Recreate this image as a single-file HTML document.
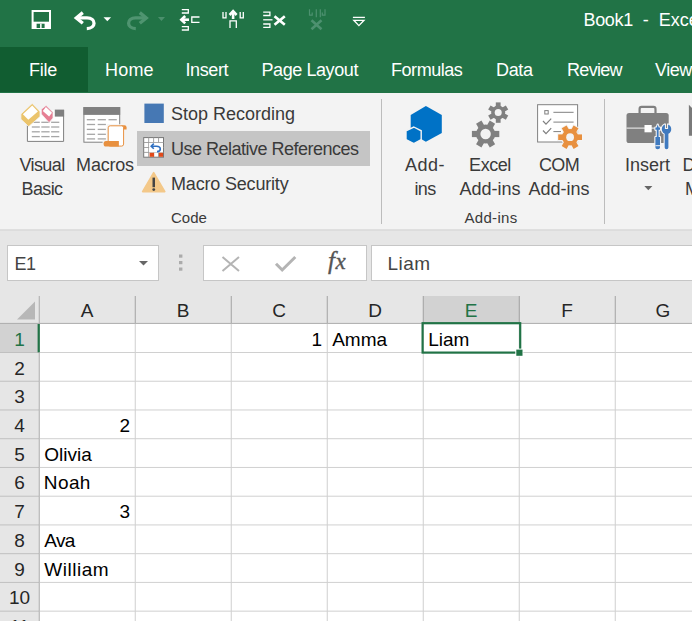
<!DOCTYPE html>
<html>
<head>
<meta charset="utf-8">
<title>Book1 - Excel</title>
<style>
html,body{margin:0;padding:0;}
body{width:692px;height:621px;overflow:hidden;position:relative;background:#e6e6e6;font-family:"Liberation Sans",sans-serif;color:#444;}
.abs{position:absolute;}
#title{left:0;top:0;width:692px;height:93px;background:#217346;}
#filetab{left:0;top:47px;width:88px;height:45px;background:#115d31;}
.tab{position:absolute;top:60px;font-size:18px;line-height:21px;color:#fff;white-space:nowrap;}
#ribbon{left:0;top:93px;width:692px;height:137px;background:#f3f3f3;}
.rt{position:absolute;font-size:18px;line-height:24px;color:#3a3a3a;white-space:nowrap;text-align:center;}
.gl{position:absolute;font-size:15px;line-height:18px;color:#3a3a3a;white-space:nowrap;}
.sep{position:absolute;top:99px;width:1px;height:125px;background:#bcbcbc;}
#hl{left:137px;top:131px;width:233px;height:34.6px;background:#c5c5c5;}
.box{position:absolute;top:245px;height:34px;background:#fff;border:1px solid #c6c6c6;}
#grid{left:0;top:295px;width:692px;height:326px;background:#fff;}
.ch{position:absolute;top:296.6px;height:27px;width:96px;font-size:19px;line-height:27px;text-align:center;color:#262626;}
.rh{position:absolute;left:0;width:39px;height:29px;font-size:19px;text-align:center;color:#262626;}
.cell{position:absolute;font-size:19px;line-height:22px;color:#000;white-space:nowrap;}
</style>
</head>
<body>
<div id="title" class="abs"></div>
<div id="filetab" class="abs"></div>
<div class="tab" style="left:29px;letter-spacing:-0.25px;">File</div>
<div class="tab" style="left:105px;letter-spacing:0.2px;">Home</div>
<div class="tab" style="left:185.5px;letter-spacing:-0.4px;">Insert</div>
<div class="tab" style="left:261.5px;letter-spacing:-0.42px;">Page Layout</div>
<div class="tab" style="left:391px;letter-spacing:-0.45px;">Formulas</div>
<div class="tab" style="left:496px;letter-spacing:-0.33px;">Data</div>
<div class="tab" style="left:567px;letter-spacing:-0.68px;">Review</div>
<div class="tab" style="left:655px;letter-spacing:-0.5px;">View</div>
<div class="tab" style="left:583.5px;top:10px;"><span style="letter-spacing:-0.35px;">Book1</span>&nbsp; -&nbsp; Excel</div>

<div id="ribbon" class="abs"></div>
<div id="hl" class="abs"></div>
<div class="sep" style="left:381px;"></div>
<div class="sep" style="left:604px;"></div>

<div class="rt" style="left:12px;width:60px;top:152.5px;letter-spacing:-0.6px;">Visual<br>Basic</div>
<div class="rt" style="left:75px;width:60px;top:152.5px;letter-spacing:-0.2px;">Macros</div>
<div class="rt" style="left:171px;top:102px;text-align:left;">Stop Recording</div>
<div class="rt" style="left:171px;top:137px;text-align:left;letter-spacing:-0.5px;">Use Relative References</div>
<div class="rt" style="left:171px;top:172px;text-align:left;letter-spacing:-0.18px;">Macro Security</div>
<div class="gl" style="left:171px;top:209px;">Code</div>

<div class="rt" style="left:395px;width:60px;top:152.5px;"><span style="letter-spacing:0.5px;">Add-</span><br><span style="letter-spacing:-0.7px;">ins</span></div>
<div class="rt" style="left:455px;width:70px;top:152.5px;"><span style="letter-spacing:-0.45px;">Excel</span><br>Add-ins</div>
<div class="rt" style="left:524px;width:70px;top:152.5px;"><span style="letter-spacing:-0.7px;">COM</span><br>Add-ins</div>
<div class="gl" style="left:464.5px;top:209px;letter-spacing:0.3px;">Add-ins</div>
<div class="rt" style="left:617.5px;width:60px;top:152.5px;">Insert</div>
<div class="rt" style="left:682.5px;top:152.5px;text-align:left;">D</div><div class="rt" style="left:685px;top:176.5px;text-align:left;">M</div>

<!-- formula bar -->
<div class="box" style="left:7px;width:150px;"></div>
<div class="box" style="left:203px;width:162px;"></div>
<div class="box" style="left:371px;width:330px;"></div>
<div class="abs" style="left:14.5px;top:254px;font-size:18px;line-height:21px;color:#444;letter-spacing:-0.5px;">E1</div>
<div class="abs" style="left:387.5px;top:253px;font-size:19px;line-height:22px;color:#444;letter-spacing:0.5px;">Liam</div>
<div class="abs" style="left:328px;top:247px;font-size:25px;line-height:28px;color:#555;font-family:'Liberation Serif',serif;font-style:italic;-webkit-text-stroke:0.35px #555;letter-spacing:0.6px;">f<span style="font-size:23px;">x</span></div>

<!-- grid -->
<div id="grid" class="abs"></div>
<div class="abs" style="left:0;top:295px;width:692px;height:28px;background:#e6e6e6;"></div>
<div class="abs" style="left:0;top:323px;width:39px;height:298px;background:#e6e6e6;"></div>
<div class="abs" style="left:423px;top:296px;width:97px;height:27px;background:#d2d2d2;"></div>
<div class="abs" style="left:0;top:324px;width:38px;height:28px;background:#d2d2d2;"></div>
<div class="ch" style="left:39px;color:#262626;">A</div>
<div class="ch" style="left:135px;color:#262626;">B</div>
<div class="ch" style="left:231px;color:#262626;">C</div>
<div class="ch" style="left:327px;color:#262626;">D</div>
<div class="ch" style="left:423px;color:#217346;">E</div>
<div class="ch" style="left:519px;color:#262626;">F</div>
<div class="ch" style="left:615px;color:#262626;">G</div>
<div class="rh" style="top:328.8px;color:#217346;">1</div>
<div class="rh" style="top:357.5px;color:#262626;">2</div>
<div class="rh" style="top:386.2px;color:#262626;">3</div>
<div class="rh" style="top:415.0px;color:#262626;">4</div>
<div class="rh" style="top:443.7px;color:#262626;">5</div>
<div class="rh" style="top:472.4px;color:#262626;">6</div>
<div class="rh" style="top:501.2px;color:#262626;">7</div>
<div class="rh" style="top:529.9px;color:#262626;">8</div>
<div class="rh" style="top:558.7px;color:#262626;">9</div>
<div class="rh" style="top:587.4px;color:#262626;">10</div>
<div class="rh" style="top:616.1px;color:#262626;">11</div>
<div class="cell" style="left:231.2px;width:91px;text-align:right;top:328.8px;">1</div>
<div class="cell" style="left:332.2px;top:328.8px;letter-spacing:0px;">Amma</div>
<div class="cell" style="left:428.2px;top:328.8px;letter-spacing:0px;">Liam</div>
<div class="cell" style="left:39.2px;width:91px;text-align:right;top:415.0px;">2</div>
<div class="cell" style="left:44.2px;top:443.7px;letter-spacing:0px;">Olivia</div>
<div class="cell" style="left:43.8px;top:472.4px;letter-spacing:0.4px;">Noah</div>
<div class="cell" style="left:39.2px;width:91px;text-align:right;top:501.2px;">3</div>
<div class="cell" style="left:44.2px;top:529.9px;letter-spacing:-0.6px;">Ava</div>
<div class="cell" style="left:44.2px;top:558.7px;letter-spacing:0.55px;">William</div>

<svg class="abs" style="left:0;top:0;" width="692" height="621" viewBox="0 0 692 621" id="ov">
<rect x="40" y="351.99" width="652" height="1" fill="#d0d0d0"/>
<rect x="0" y="351.99" width="39" height="1" fill="#c0c0c0"/>
<rect x="40" y="380.73" width="652" height="1" fill="#d0d0d0"/>
<rect x="0" y="380.73" width="39" height="1" fill="#c0c0c0"/>
<rect x="40" y="409.47" width="652" height="1" fill="#d0d0d0"/>
<rect x="0" y="409.47" width="39" height="1" fill="#c0c0c0"/>
<rect x="40" y="438.21" width="652" height="1" fill="#d0d0d0"/>
<rect x="0" y="438.21" width="39" height="1" fill="#c0c0c0"/>
<rect x="40" y="466.95" width="652" height="1" fill="#d0d0d0"/>
<rect x="0" y="466.95" width="39" height="1" fill="#c0c0c0"/>
<rect x="40" y="495.69" width="652" height="1" fill="#d0d0d0"/>
<rect x="0" y="495.69" width="39" height="1" fill="#c0c0c0"/>
<rect x="40" y="524.43" width="652" height="1" fill="#d0d0d0"/>
<rect x="0" y="524.43" width="39" height="1" fill="#c0c0c0"/>
<rect x="40" y="553.17" width="652" height="1" fill="#d0d0d0"/>
<rect x="0" y="553.17" width="39" height="1" fill="#c0c0c0"/>
<rect x="40" y="581.91" width="652" height="1" fill="#d0d0d0"/>
<rect x="0" y="581.91" width="39" height="1" fill="#c0c0c0"/>
<rect x="40" y="610.65" width="652" height="1" fill="#d0d0d0"/>
<rect x="0" y="610.65" width="39" height="1" fill="#c0c0c0"/>
<rect x="40" y="639.39" width="652" height="1" fill="#d0d0d0"/>
<rect x="0" y="639.39" width="39" height="1" fill="#c0c0c0"/>
<rect x="134.75" y="324" width="1" height="297" fill="#d0d0d0"/>
<rect x="134.75" y="296" width="1" height="27" fill="#a2a2a2"/>
<rect x="230.75" y="324" width="1" height="297" fill="#d0d0d0"/>
<rect x="230.75" y="296" width="1" height="27" fill="#a2a2a2"/>
<rect x="326.75" y="324" width="1" height="297" fill="#d0d0d0"/>
<rect x="326.75" y="296" width="1" height="27" fill="#a2a2a2"/>
<rect x="422.75" y="324" width="1" height="297" fill="#d0d0d0"/>
<rect x="422.75" y="296" width="1" height="27" fill="#a2a2a2"/>
<rect x="518.75" y="324" width="1" height="297" fill="#d0d0d0"/>
<rect x="518.75" y="296" width="1" height="27" fill="#a2a2a2"/>
<rect x="614.75" y="324" width="1" height="297" fill="#d0d0d0"/>
<rect x="614.75" y="296" width="1" height="27" fill="#a2a2a2"/>
<rect x="710.75" y="324" width="1" height="297" fill="#d0d0d0"/>
<rect x="710.75" y="296" width="1" height="27" fill="#a2a2a2"/>
<rect x="0" y="322.9" width="692" height="1" fill="#ababab"/>
<rect x="38.75" y="296" width="1" height="325" fill="#ababab"/>
<path d="M35 301.5 L35 319.5 L17 319.5 Z" fill="#b7b7b7"/>
<rect x="37.6" y="324" width="2.2" height="28.3" fill="#217346"/>
<rect x="422.6" y="323.2" width="97.6" height="29.4" fill="none" stroke="#217346" stroke-width="2.2"/>
<rect x="515.3" y="348.6" width="8" height="8" fill="#fff"/>
<rect x="516.3" y="349.6" width="6.2" height="6.2" fill="#217346"/>
<rect x="32.6" y="11" width="17.4" height="17" fill="none" stroke="#fff" stroke-width="2"/>
<rect x="33" y="21.7" width="17" height="7" fill="#fff"/>
<rect x="36.6" y="23.7" width="8" height="4.3" fill="#217346"/>
<rect x="40.1" y="23.7" width="1.5" height="4.3" fill="#fff"/>
<g fill="none" stroke="#fff" stroke-width="3.3"><path d="M82.8 12.6 L76.3 17.9 L82.8 23.3" stroke-linejoin="miter"/><path d="M77 17.9 H87 C96.3 17.9 96.5 28.3 86.8 28.6"/></g>
<path d="M103.5 17.3 H111.1 L107.3 21.2 Z" fill="#fff"/>
<g fill="none" stroke="#4f9470" stroke-width="3.3" transform="translate(222.6,0) scale(-1,1)"><path d="M82.8 12.6 L76.3 17.9 L82.8 23.3" stroke-linejoin="miter"/><path d="M77 17.9 H87 C96.3 17.9 96.5 28.3 86.8 28.6"/></g>
<path d="M157.9 17 H165 L161.45 21 Z" fill="#4b8f6c"/>
<g fill="none" stroke="#fff" stroke-width="1.3">
<path d="M181.8 9.7 H188.3 V13 H181.8"/>
<path d="M181.8 26.6 H188.3 V30 H181.8"/>
<path d="M199.5 17 H191.8 V22.4 H199.5"/>
</g>
<g fill="none" stroke="#fff" stroke-width="2.6"><path d="M181.5 19.7 H189"/><path d="M185.2 16 L181.3 19.7 L185.2 23.4"/></g>
<g fill="none" stroke="#fff" stroke-width="1.3">
<path d="M223 12 V17.8 H226 V12"/>
<path d="M240.2 12 V17.8 H243.3 V12"/>
<path d="M230 28 V20.8 H236.3 V28"/>
</g>
<g fill="none" stroke="#fff" stroke-width="2.6"><path d="M233.1 11.5 V19"/><path d="M229.6 15 L233.1 11.2 L236.6 15"/></g>
<g fill="none" stroke="#fff" stroke-width="1.3">
<path d="M263.2 12.2 H269.9 V15.5 H263.2"/>
<path d="M263.2 19.8 H272.5"/>
<path d="M263.2 24 H269.9 V27.4 H263.2"/>
</g>
<g fill="none" stroke="#fff" stroke-width="2.6"><path d="M274.5 16.2 L284.8 24.8 M284.8 16.2 L274.5 24.8"/></g>
<g fill="none" stroke="#4d9170" stroke-width="1.2">
<path d="M309.5 9.3 V15.2 H312.2 V12.5"/>
<path d="M316.3 9.3 V17.3"/>
<path d="M320.3 9.3 V17.3"/>
<path d="M325 9.3 V15.2 H322.3 V12.5"/>
</g>
<g fill="none" stroke="#4d9170" stroke-width="2.6"><path d="M311.5 20.3 L321.5 29.3 M321.5 20.3 L311.5 29.3"/></g>
<g fill="none" stroke="#fff" stroke-width="1.3"><path d="M352.9 17.4 H364.9"/><path d="M353.8 20.3 H364 L358.9 25.6 Z"/></g>
<rect x="27.4" y="110.1" width="36.2" height="31.3" fill="#fff"/>
<path d="M27.4 116 V141.4 H63.6 V110.1" fill="none" stroke="#7f7f7f" stroke-width="1"/>
<rect x="54.8" y="109.6" width="9.3" height="7" fill="#7f7f7f"/>
<rect x="31.8" y="121.64999999999999" width="8.0" height="1.3" fill="#a6a6a6"/>
<rect x="41.3" y="121.64999999999999" width="8.3" height="1.3" fill="#a6a6a6"/>
<rect x="51.1" y="121.64999999999999" width="8.2" height="1.3" fill="#a6a6a6"/>
<rect x="31.8" y="126.35" width="8.0" height="1.3" fill="#a6a6a6"/>
<rect x="41.3" y="126.35" width="8.3" height="1.3" fill="#a6a6a6"/>
<rect x="51.1" y="126.35" width="8.2" height="1.3" fill="#a6a6a6"/>
<rect x="31.8" y="131.15" width="8.0" height="1.3" fill="#a6a6a6"/>
<rect x="41.3" y="131.15" width="8.3" height="1.3" fill="#a6a6a6"/>
<rect x="51.1" y="131.15" width="8.2" height="1.3" fill="#a6a6a6"/>
<rect x="31.8" y="135.95" width="8.0" height="1.3" fill="#a6a6a6"/>
<rect x="41.3" y="135.95" width="8.3" height="1.3" fill="#a6a6a6"/>
<rect x="51.1" y="135.95" width="8.2" height="1.3" fill="#a6a6a6"/>
<polygon points="32.2,103.4 40,111.4 40,116.6 28.7,126.6 20.9,119.2 20.9,114" fill="#ebc46c" stroke="#f3f3f3" stroke-width="0.8"/>
<polygon points="32.2,105.6 37.9,111.4 28.3,119.7 22.9,114.3" fill="#fff"/>
<polygon points="46.1,105.4 53,112.3 53,118 49.1,122.7 41.3,114 41.3,109.3" fill="#e67f94" stroke="#f3f3f3" stroke-width="0.8"/>
<polygon points="45.9,106.9 52,112.7 49.1,116.6 42.8,111" fill="#fff"/>
<rect x="83.9" y="107.6" width="35.8" height="34.6" fill="#fff" stroke="#808080" stroke-width="1"/>
<rect x="83.4" y="107.1" width="36.8" height="7.8" fill="#808080"/>
<rect x="86.8" y="119.05" width="8.3" height="1.3" fill="#a6a6a6"/>
<rect x="97.7" y="119.05" width="8.2" height="1.3" fill="#a6a6a6"/>
<rect x="108.5" y="119.05" width="8.3" height="1.3" fill="#a6a6a6"/>
<rect x="86.8" y="123.85" width="8.3" height="1.3" fill="#a6a6a6"/>
<rect x="97.7" y="123.85" width="8.2" height="1.3" fill="#a6a6a6"/>
<rect x="86.8" y="128.75" width="8.3" height="1.3" fill="#a6a6a6"/>
<rect x="97.7" y="128.75" width="8.2" height="1.3" fill="#a6a6a6"/>
<rect x="86.8" y="133.65" width="8.3" height="1.3" fill="#a6a6a6"/>
<rect x="97.7" y="133.65" width="8.2" height="1.3" fill="#a6a6a6"/>
<rect x="86.8" y="138.25" width="8.3" height="1.3" fill="#a6a6a6"/>
<rect x="97.7" y="138.25" width="8.2" height="1.3" fill="#a6a6a6"/>
<path d="M102.6 147.6 V140 H106.6 V124.3 H127.6 V130.6 H125.2 V147.6 Z" fill="#f4f4f4"/>
<path d="M121 125.3 H124.5 Q126.6 125.3 126.6 127.4 V129.6 H121 Z" fill="#e8903f"/>
<rect x="108.2" y="125.8" width="15.4" height="20.3" rx="2" fill="#fff" stroke="#e8903f" stroke-width="1"/>
<path d="M106 140.9 H118.9 V146.6 H106 Q103.6 146.6 103.6 143.75 Q103.6 140.9 106 140.9 Z" fill="#e8903f"/>
<rect x="144.4" y="103.6" width="19.4" height="19.4" fill="#4678b4"/>
<rect x="143.7" y="137.6" width="19.8" height="19.6" fill="#fff" stroke="#777" stroke-width="1"/>
<rect x="148.25" y="137.6" width="0.9" height="19.6" fill="#9a9a9a"/>
<rect x="143.7" y="142.10" width="19.8" height="0.9" fill="#9a9a9a"/>
<rect x="153.20" y="137.6" width="0.9" height="19.6" fill="#9a9a9a"/>
<rect x="143.7" y="147.00" width="19.8" height="0.9" fill="#9a9a9a"/>
<rect x="158.15" y="137.6" width="0.9" height="19.6" fill="#9a9a9a"/>
<rect x="143.7" y="151.90" width="19.8" height="0.9" fill="#9a9a9a"/>
<rect x="149.2" y="142.9" width="13.8" height="9.5" fill="#fff"/>
<rect x="149.6" y="152.8" width="4.5" height="4" fill="#e04a1b"/>
<rect x="158.9" y="152.8" width="4.2" height="4" fill="#e04a1b"/>
<g fill="none" stroke="#2f6fc0" stroke-width="1.6"><path d="M151.5 146.2 H156.5 Q160.3 146.2 160.3 149 Q160.3 151.6 157 151.6"/><path d="M153.8 143.6 L151.2 146.2 L153.8 148.8"/></g>
<path d="M153.7 172.6 L164.8 191.6 H142.6 Z" fill="#f3c889" stroke="#f3c889" stroke-width="1.6" stroke-linejoin="round"/>
<rect x="152.5" y="177.6" width="2.5" height="9.6" fill="#444"/>
<circle cx="153.75" cy="189.6" r="1.4" fill="#444"/>
<polygon points="425.9,106 441.8,114.9 441.8,133.1 425.9,141.8 410.7,133.1 410.7,114.9" fill="#0072c6"/>
<polygon points="413.8,127 421.2,130.8 421.2,139.5 413.8,143.5 406,139.5 406,130.8" fill="#0072c6" stroke="#f3f3f3" stroke-width="1.4"/>
<g fill="#808080"><circle cx="485.6" cy="134" r="9.6"/><rect x="482.50" y="120.30" width="6.2" height="13.70" transform="rotate(30.0 485.6 134)"/><rect x="482.50" y="120.30" width="6.2" height="13.70" transform="rotate(90.0 485.6 134)"/><rect x="482.50" y="120.30" width="6.2" height="13.70" transform="rotate(150.0 485.6 134)"/><rect x="482.50" y="120.30" width="6.2" height="13.70" transform="rotate(210.0 485.6 134)"/><rect x="482.50" y="120.30" width="6.2" height="13.70" transform="rotate(270.0 485.6 134)"/><rect x="482.50" y="120.30" width="6.2" height="13.70" transform="rotate(330.0 485.6 134)"/></g><circle cx="485.6" cy="134" r="5.2" fill="#f3f3f3"/>
<g fill="#808080"><circle cx="498.2" cy="112.6" r="7"/><rect x="495.80" y="102.40" width="4.8" height="10.20" transform="rotate(0.0 498.2 112.6)"/><rect x="495.80" y="102.40" width="4.8" height="10.20" transform="rotate(60.0 498.2 112.6)"/><rect x="495.80" y="102.40" width="4.8" height="10.20" transform="rotate(120.0 498.2 112.6)"/><rect x="495.80" y="102.40" width="4.8" height="10.20" transform="rotate(180.0 498.2 112.6)"/><rect x="495.80" y="102.40" width="4.8" height="10.20" transform="rotate(240.0 498.2 112.6)"/><rect x="495.80" y="102.40" width="4.8" height="10.20" transform="rotate(300.0 498.2 112.6)"/></g><circle cx="498.2" cy="112.6" r="3.5" fill="#f3f3f3"/>
<rect x="537.6" y="104.7" width="40" height="37.3" fill="#fff" stroke="#808080" stroke-width="1"/>
<rect x="544.8" y="110.6" width="3.4" height="3.4" fill="#fff" stroke="#808080" stroke-width="1"/>
<g fill="none" stroke="#808080" stroke-width="1"><path d="M553.4 112.3 H573.6 M553.4 122.1 H573.6 M553.4 131.6 H561"/><path d="M543 121 L546 124.2 L551.2 118.6 M543 130.5 L546 133.7 L551.2 128.1" stroke-width="1.2"/></g>
<g fill="#f4f4f4" stroke="#f4f4f4" stroke-width="2"><circle cx="570.1" cy="137.2" r="8.2"/><rect x="567.30" y="125.30" width="5.6" height="11.90" transform="rotate(30.0 570.1 137.2)"/><rect x="567.30" y="125.30" width="5.6" height="11.90" transform="rotate(90.0 570.1 137.2)"/><rect x="567.30" y="125.30" width="5.6" height="11.90" transform="rotate(150.0 570.1 137.2)"/><rect x="567.30" y="125.30" width="5.6" height="11.90" transform="rotate(210.0 570.1 137.2)"/><rect x="567.30" y="125.30" width="5.6" height="11.90" transform="rotate(270.0 570.1 137.2)"/><rect x="567.30" y="125.30" width="5.6" height="11.90" transform="rotate(330.0 570.1 137.2)"/></g><g fill="#e8903f"><circle cx="570.1" cy="137.2" r="8.2"/><rect x="567.30" y="125.30" width="5.6" height="11.90" transform="rotate(30.0 570.1 137.2)"/><rect x="567.30" y="125.30" width="5.6" height="11.90" transform="rotate(90.0 570.1 137.2)"/><rect x="567.30" y="125.30" width="5.6" height="11.90" transform="rotate(150.0 570.1 137.2)"/><rect x="567.30" y="125.30" width="5.6" height="11.90" transform="rotate(210.0 570.1 137.2)"/><rect x="567.30" y="125.30" width="5.6" height="11.90" transform="rotate(270.0 570.1 137.2)"/><rect x="567.30" y="125.30" width="5.6" height="11.90" transform="rotate(330.0 570.1 137.2)"/></g><circle cx="570.1" cy="137.2" r="3.9" fill="#f3f3f3"/>
<rect x="639.6" y="106.9" width="15.9" height="10" rx="2" fill="none" stroke="#808080" stroke-width="2.2"/>
<rect x="626.5" y="113.1" width="42.2" height="29.9" rx="2.6" fill="#808080"/>
<rect x="626.5" y="127.6" width="29" height="1" fill="#f3f3f3"/>
<rect x="644.5" y="125" width="7.2" height="7.3" fill="#fff"/>
<g fill="#f3f3f3" stroke="#f3f3f3" stroke-width="2.2" stroke-linejoin="round">
<path d="M657.7 124.6 L658.7 127.6 H660 V129.8 H658.6 V137 H660 V147.4 Q660 149.2 657.7 149.2 Q655.4 149.2 655.4 147.4 V137 H656.8 V129.8 H655.4 V127.6 H656.7 Z"/><path d="M664.9 124.4 V129 H668.1 V124.4 A5.2 5.2 0 0 1 668.4 133.8 V147.4 Q668.4 149.2 666.55 149.2 Q664.7 149.2 664.7 147.4 V133.8 A5.2 5.2 0 0 1 664.9 124.4 Z"/></g>
<g fill="#3f7abf"><path d="M657.7 124.6 L658.7 127.6 H660 V129.8 H658.6 V137 H660 V147.4 Q660 149.2 657.7 149.2 Q655.4 149.2 655.4 147.4 V137 H656.8 V129.8 H655.4 V127.6 H656.7 Z"/><path d="M664.9 124.4 V129 H668.1 V124.4 A5.2 5.2 0 0 1 668.4 133.8 V147.4 Q668.4 149.2 666.55 149.2 Q664.7 149.2 664.7 147.4 V133.8 A5.2 5.2 0 0 1 664.9 124.4 Z"/></g>
<rect x="655.4" y="145.2" width="4.6" height="1" fill="#f3f3f3"/>
<path d="M644.3 186 H652.4 L648.35 190.2 Z" fill="#666"/>
<path d="M688.9 104.8 L692 108 V135.7 H688.9 Z" fill="#7a7a7a"/>
<path d="M139 261 H148 L143.5 265.5 Z" fill="#666"/>
<rect x="179" y="254.5" width="3.4" height="3.2" fill="#ababab"/>
<rect x="179" y="261.0" width="3.4" height="3.2" fill="#ababab"/>
<rect x="179" y="267.5" width="3.4" height="3.2" fill="#ababab"/>
<g fill="none" stroke="#b4b4b4" stroke-width="2"><path d="M222.5 257 L239 271 M239 257 L222.5 271"/><path d="M276 263.8 L282.2 270 L295.3 257" stroke-width="3"/></g>
<rect x="0" y="229.4" width="692" height="1.1" fill="#d2d2d2"/>
</svg>
</body>
</html>
